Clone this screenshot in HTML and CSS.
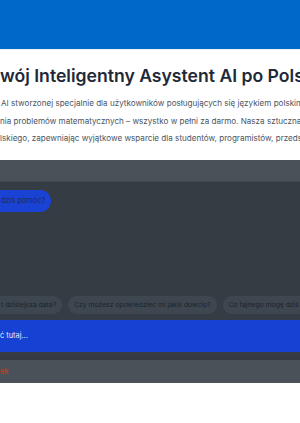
FILE: index.html
```html
<!DOCTYPE html>
<html lang="pl">
<head>
<meta charset="UTF-8">
<meta name="viewport" content="width=device-width, initial-scale=1.0">
<title>Asystent AI po Polsku</title>
<link rel="stylesheet" href="styles.css">
</head>
<body>

<header class="topbar"></header>

<div class="hero">
  <h1 class="hero-title">wój Inteligentny Asystent AI po Polsku</h1>
  <p class="hero-line line-1">AI stworzonej specjalnie dla użytkowników posługujących się językiem polskim, do</p>
  <p class="hero-line line-2">nia problemów matematycznych – wszystko w pełni za darmo. Nasza sztuczna inteligencja</p>
  <p class="hero-line line-3">lskiego, zapewniając wyjątkowe wsparcie dla studentów, programistów, przedsiębiorców</p>
</div>

<div class="chat">
  <div class="chat-head"></div>
  <div class="chat-body">
    <div class="bubble">dziś pomóc?</div>
    <div class="suggestions">
      <span class="chip">t dzisiejsza data?</span>
      <span class="chip">Czy możesz opowiedzieć mi jakiś dowcip?</span>
      <span class="chip">Co fajnego mogę dziś zrobić?</span>
    </div>
  </div>
  <div class="chat-input">ć tutaj...</div>
  <div class="chat-foot"><span class="foot-link">ek</span></div>
</div>

</body>
</html>
```

FILE: styles.css
```css
body {
  font-family: Inter, "Noto Sans", sans-serif;
  margin: 0;
  overflow: hidden;
  background: #fff;
}
.topbar {
  background-color: #0068c9;
  height: 49px;
  border-bottom: 1px solid #eef1f4;
}
.hero {
  padding-top: 13px;
  height: 97px;
}
.hero-title {
  margin: 0 0 6px 0;
  font-size: 17.6px;
  font-weight: 600;
  color: #1f2937;
  white-space: nowrap;
  line-height: 26px;
}
.hero-line {
  margin: 0;
  font-size: 8.1px;
  line-height: 17.5px;
  color: #4b5563;
  white-space: nowrap;
}
.line-1 {
  padding-left: 1px;
}
.chat {
  background: #363c43;
}
.chat-head {
  height: 21px;
  background: #4b5158;
  border-bottom: 1px solid #40464d;
}
.chat-body {
  height: 138px;
  padding-top: 8px;
  display: flex;
  flex-direction: column;
  justify-content: space-between;
  box-sizing: border-box;
}
.bubble {
  align-self: flex-start;
  background: #1a43d6;
  color: #1e2a4a;
  font-size: 7.4px;
  line-height: 22px;
  padding: 0 6px 0 1px;
  border-radius: 0 11px 11px 0;
}
.suggestions {
  display: flex;
  gap: 6px;
  white-space: nowrap;
  padding-bottom: 6px;
}
.chip {
  background: #3e4750;
  color: #1c232c;
  font-size: 6.8px;
  line-height: 18px;
  padding: 0 6px;
  border-radius: 9px;
}
.chip:first-child {
  padding-left: 1px;
  border-radius: 0 9px 9px 0;
}
.chat-input {
  background: #1741d2;
  color: #e6ebff;
  font-size: 7.4px;
  line-height: 32px;
  height: 32px;
  margin-bottom: 8px;
}
.chat-foot {
  background: #4b5158;
  height: 23px;
  line-height: 23px;
  font-size: 7.4px;
  box-shadow: 0 2px 6px rgba(0, 0, 0, 0.25);
}
.foot-link {
  color: #c0392b;
  font-weight: 600;
}
```
